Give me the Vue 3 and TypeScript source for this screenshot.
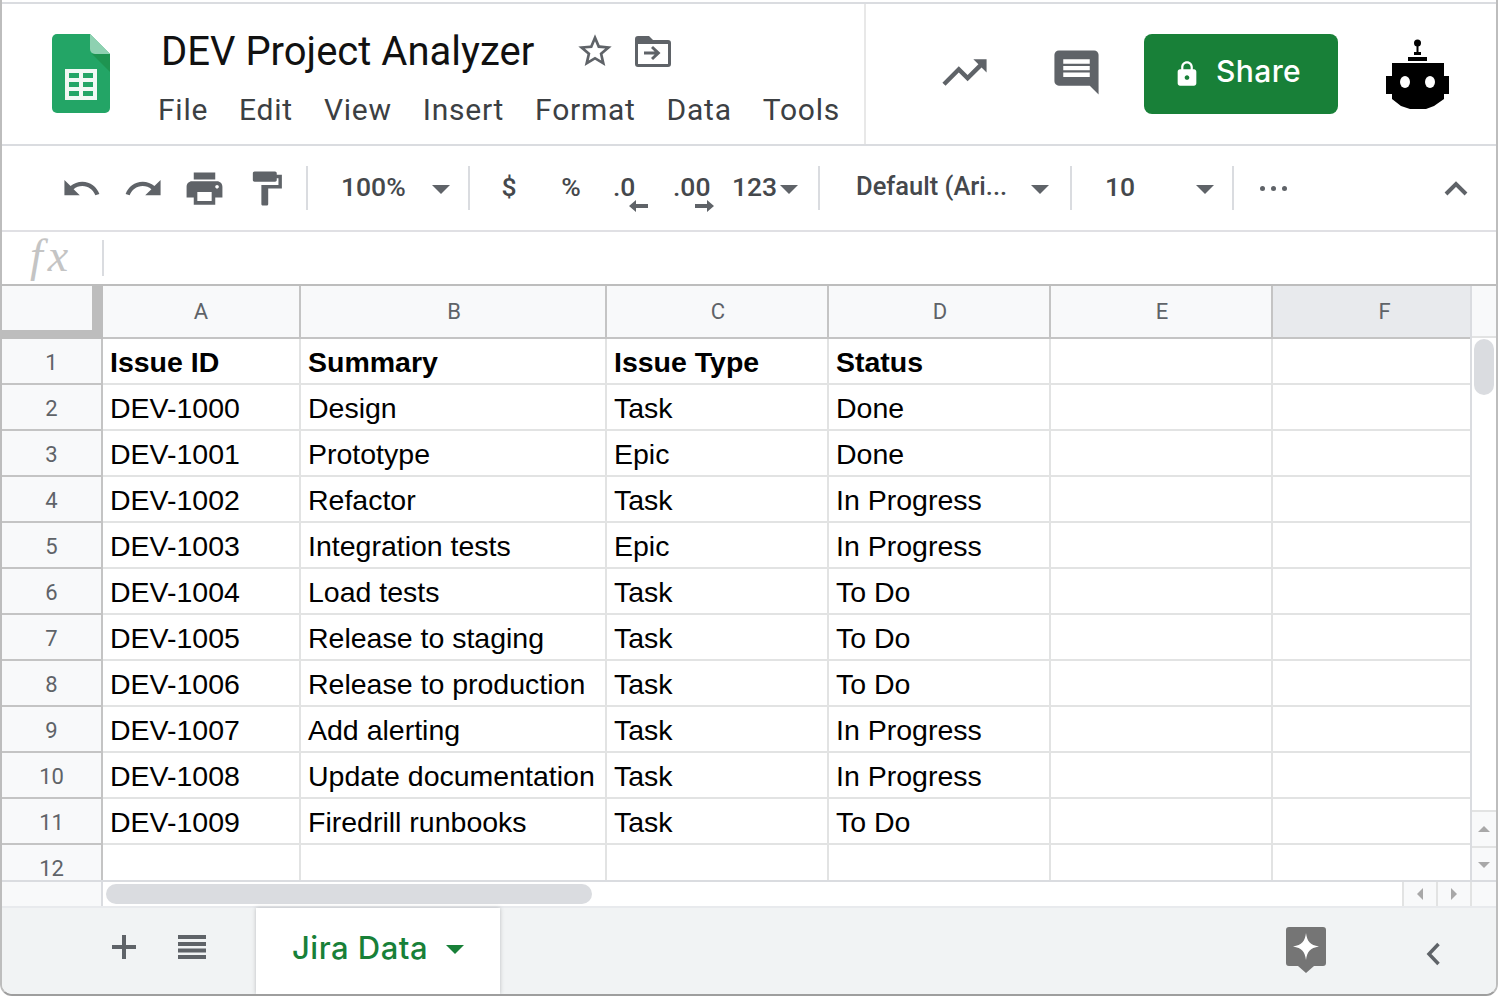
<script setup lang="ts">
const menus = ["File", "Edit", "View", "Insert", "Format", "Data", "Tools"];
const columns = ["A", "B", "C", "D", "E", "F"];

const rows: string[][] = [
  ["Issue ID", "Summary", "Issue Type", "Status"],
  ["DEV-1000", "Design", "Task", "Done"],
  ["DEV-1001", "Prototype", "Epic", "Done"],
  ["DEV-1002", "Refactor", "Task", "In Progress"],
  ["DEV-1003", "Integration tests", "Epic", "In Progress"],
  ["DEV-1004", "Load tests", "Task", "To Do"],
  ["DEV-1005", "Release to staging", "Task", "To Do"],
  ["DEV-1006", "Release to production", "Task", "To Do"],
  ["DEV-1007", "Add alerting", "Task", "In Progress"],
  ["DEV-1008", "Update documentation", "Task", "In Progress"],
  ["DEV-1009", "Firedrill runbooks", "Task", "To Do"],
  ["", "", "", ""],
];
</script>

<template>
  <div class="frame">
    <header class="head">
      <div class="doc">
        <svg class="logo" width="58" height="79" viewBox="0 0 58 79">
          <path d="M5 0h33l20 20v54a5 5 0 0 1-5 5H5a5 5 0 0 1-5-5V5a5 5 0 0 1 5-5z" fill="#23a566" />
          <path d="M38 0l20 20H43a5 5 0 0 1-5-5z" fill="#8ed1b1" />
          <path d="M40 20l18 18V20z" fill="#188038" opacity=".45" />
          <rect x="13" y="35" width="32" height="31" fill="#f1f8f4" />
          <path d="M17 39h10v5H17zM31 39h10v5H31zM17 48h10v5H17zM31 48h10v5H31zM17 57h10v5H17zM31 57h10v5H31z" fill="#23a566" />
        </svg>
        <div class="doc-text">
          <div class="title-row">
            <span class="title">DEV Project Analyzer</span>
            <svg class="star" width="40" height="40" viewBox="0 0 24 24">
              <path fill="#5f6368" d="M22 9.24l-7.19-.62L12 2 9.19 8.63 2 9.24l5.46 4.73L5.82 21 12 17.27 18.18 21l-1.63-7.03L22 9.24zM12 15.4l-3.76 2.27 1-4.28-3.32-2.88 4.38-.38L12 6.1l1.71 4.04 4.38.38-3.32 2.88 1 4.28L12 15.4z" />
            </svg>
            <svg class="move" width="36" height="31" viewBox="0 0 36 31">
              <path fill="#5f6368" fill-rule="evenodd" d="M3 0h11l4 4h15a3 3 0 0 1 3 3v21a3 3 0 0 1-3 3H3a3 3 0 0 1-3-3V3a3 3 0 0 1 3-3zM3 8v20h30V8z" />
              <path fill="#5f6368" d="M18 10l-2 2 3.600 3.500H9v3h10.600L16 22l2 2 7.500-7z" />
            </svg>
          </div>
          <nav class="menu">
            <span v-for="m in menus" :key="m">{{ m }}</span>
          </nav>
        </div>
      </div>
      <div class="actions">
        <svg class="trend" width="53" height="53" viewBox="0 0 24 24">
          <path fill="#5f6368" d="M16 6l2.29 2.29-4.88 4.88-4-4L2 16.59 3.41 18l6-6 4 4 6.3-6.29L22 12V6z" />
        </svg>
        <svg class="comment" width="53" height="53" viewBox="0 0 24 24">
          <path fill="#5f6368" d="M21.99 4c0-1.1-.89-2-1.99-2H4c-1.1 0-2 .9-2 2v12c0 1.1.9 2 2 2h14l4 4-.01-18zM18 14H6v-2h12v2zm0-3H6V9h12v2zm0-3H6V6h12v2z" />
        </svg>
        <button class="share">
          <svg width="28" height="28" viewBox="0 0 24 24">
            <path fill="#fff" d="M18 8h-1V6c0-2.76-2.24-5-5-5S7 3.24 7 6v2H6c-1.1 0-2 .9-2 2v10c0 1.1.9 2 2 2h12c1.1 0 2-.9 2-2V10c0-1.1-.9-2-2-2zm-6 9c-1.1 0-2-.9-2-2s.9-2 2-2 2 .9 2 2-.9 2-2 2zm3.100-9H8.900V6c0-1.71 1.39-3.1 3.100-3.100 1.71 0 3.100 1.39 3.100 3.100v2z" />
          </svg>
          <span>Share</span>
        </button>
        <svg class="robot" width="63" height="70" viewBox="0 0 63 70">
          <circle cx="31.5" cy="4" r="3.5" />
          <path d="M30.500 6h2v8h-2zM28 13h7v3h-7zM22 18h19v4H22z" />
          <path d="M6 24h52v13h5v18h-5v5l-10 7-8 3H24l-9-3-9-7v-5H0V37h6z" />
          <ellipse cx="19" cy="43" rx="5" ry="6" fill="#fff" />
          <ellipse cx="44" cy="43" rx="5" ry="6" fill="#fff" />
        </svg>
      </div>
    </header>

    <div class="toolbar">
      <span class="tool">
        <svg width="41" height="41" viewBox="0 0 24 24"><path d="M12.500 8c-2.650 0-5.050.99-6.900 2.600L2 7v9h9l-3.620-3.620c1.390-1.160 3.160-1.880 5.120-1.880 3.540 0 6.550 2.310 7.600 5.500l2.370-.78C21.080 11.030 17.150 8 12.500 8z" /></svg>
      </span>
      <span class="tool">
        <svg width="41" height="41" viewBox="0 0 24 24"><path d="M18.400 10.600C16.550 8.990 14.150 8 11.500 8c-4.650 0-8.580 3.030-9.960 7.220L3.900 16c1.050-3.190 4.050-5.500 7.600-5.500 1.950 0 3.730.72 5.120 1.880L13 16h9V7l-3.600 3.600z" /></svg>
      </span>
      <span class="tool nudge">
        <svg width="43" height="43" viewBox="0 0 24 24"><path d="M19 8H5c-1.660 0-3 1.340-3 3v6h4v4h12v-4h4v-6c0-1.660-1.340-3-3-3zm-3 11H8v-5h8v5zm3-7c-.55 0-1-.45-1-1s.45-1 1-1 1 .45 1 1-.45 1-1 1zm-1-9H6v4h12V3z" /></svg>
      </span>
      <span class="tool nudge">
        <svg width="41" height="41" viewBox="0 0 24 24"><path d="M18 4V3c0-.55-.45-1-1-1H5c-.55 0-1 .45-1 1v4c0 .55.45 1 1 1h12c.55 0 1-.45 1-1V6h1v4H9v11c0 .55.45 1 1 1h2c.55 0 1-.45 1-1v-9h8V4h-3z" /></svg>
      </span>
      <i class="sep first" />
      <span class="drop zoom"><span>100%</span><i class="caret" /></span>
      <i class="sep" />
      <span class="tool label money">$</span>
      <span class="tool label pct">%</span>
      <span class="tool label dec">.0
        <svg class="dec-arrow" width="19" height="14" viewBox="0 0 19 14"><path d="M7 1v4h12v4H7v4L0 7z" /></svg>
      </span>
      <span class="tool label dec more">.00
        <svg class="dec-arrow" width="19" height="14" viewBox="0 0 19 14"><path d="M12 1v4H0v4h12v4l7-6z" /></svg>
      </span>
      <span class="drop num"><span>123</span><i class="caret" /></span>
      <i class="sep" />
      <span class="drop font"><span>Default (Ari...</span><i class="caret" /></span>
      <i class="sep" />
      <span class="drop size"><span>10</span><i class="caret" /></span>
      <i class="sep" />
      <span class="dots"><i /><i /><i /></span>
      <svg class="collapse" width="26" height="16" viewBox="0 0 26 16">
        <path d="M3 14L13 4l10 10" fill="none" stroke="#5f6368" stroke-width="4" />
      </svg>
    </div>

    <div class="formula">
      <span class="fx">fx</span>
      <i class="fx-sep" />
    </div>

    <div class="sheet">
      <div class="grid">
        <div class="corner" />
        <div v-for="c in columns" :key="c" class="col-head" :class="{ picked: c === 'F' }">{{ c }}</div>
        <template v-for="(row, i) in rows" :key="i">
          <div class="row-head">{{ i + 1 }}</div>
          <div v-for="(text, j) in row" :key="j" class="cell" :class="{ bold: i === 0 }">{{ text }}</div>
          <div class="cell" />
          <div class="cell" />
        </template>
      </div>
      <div class="vbar">
        <div class="vbar-top" />
        <div class="vtrack"><div class="vthumb" /></div>
        <div class="vbtn"><i class="tri up" /></div>
        <div class="vbtn"><i class="tri down" /></div>
      </div>
    </div>

    <div class="hbar">
      <div class="hbar-left" />
      <div class="htrack"><div class="hthumb" /></div>
      <div class="hbtn"><i class="tri left" /></div>
      <div class="hbtn"><i class="tri right" /></div>
      <div class="hbar-end" />
    </div>

    <footer class="tabs">
      <svg class="plus" width="24" height="24" viewBox="0 0 24 24">
        <path fill="#5f6368" d="M10 0h4v10h10v4H14v10h-4V14H0v-4h10z" />
      </svg>
      <svg class="all" width="28" height="24" viewBox="0 0 28 24">
        <path fill="#5f6368" d="M0 0h28v4H0zM0 7h28v4H0zM0 13.500h28v4H0zM0 20h28v4H0z" />
      </svg>
      <div class="tab">
        <span>Jira Data</span>
        <i class="caret green" />
      </div>
      <svg class="explore" width="40" height="46" viewBox="0 0 40 46">
        <path fill="#757575" d="M3 0h34a3 3 0 0 1 3 3v33a3 3 0 0 1-3 3h-9l-8 7-8-7H3a3 3 0 0 1-3-3V3a3 3 0 0 1 3-3z" />
        <path fill="#fff" d="M20 6c1 8 4 12 13 13.500C24 21 21 25 20 33c-1-8-4-12-13-13.500C16 18 19 14 20 6z" />
      </svg>
      <svg class="side" width="14" height="24" viewBox="0 0 14 24">
        <path d="M12.500 2L3 12l9.500 10" fill="none" stroke="#5f6368" stroke-width="3.500" />
      </svg>
    </footer>
  </div>
</template>

<style scoped>
.frame {
  width: 1498px;
  height: 996px;
  box-sizing: border-box;
  display: flex;
  flex-direction: column;
  padding-top: 2px;
  border-left: 2px solid #bdbdbd;
  border-right: 2px solid #bdbdbd;
  border-bottom: 2px solid #9e9e9e;
  border-radius: 0 0 12px 12px;
  overflow: hidden;
  background: #fff;
  font-family: Roboto, "Liberation Sans", sans-serif;
}

i {
  display: block;
}

.head {
  height: 144px;
  flex: none;
  display: flex;
  box-sizing: border-box;
  border-top: 2px solid #dadce0;
  border-bottom: 2px solid #dadce0;
}

.doc {
  width: 864px;
  display: flex;
  box-sizing: border-box;
  padding: 30px 0 0 50px;
  border-right: 2px solid #e8e8e8;
}

.logo {
  flex: none;
}

.doc-text {
  margin-left: 48px;
  margin-top: -9px;
}

.title-row {
  display: flex;
  align-items: center;
  height: 52px;
  margin-left: 3px;
}

.title {
  font-size: 40px;
  color: #111;
  white-space: nowrap;
}

.star {
  margin-left: 41px;
}

.move {
  margin-left: 20px;
}

.menu {
  display: flex;
  gap: 31px;
  margin-top: 15px;
  font-size: 30px;
  line-height: 36px;
  letter-spacing: 0.75px;
  color: #3c4043;
}

.actions {
  flex: 1;
  display: flex;
  align-items: center;
  padding-left: 72px;
}

.trend {
  margin-top: -4px;
}

.comment {
  margin-left: 59px;
  margin-top: -4px;
}

.share {
  width: 194px;
  height: 80px;
  margin-left: 41px;
  border: 0;
  border-radius: 8px;
  background: #188038;
  color: #fff;
  display: flex;
  align-items: center;
  padding: 0 0 6px 29px;
  font-family: Inter, Roboto, sans-serif;
  font-weight: 500;
  font-size: 30px;
  letter-spacing: 0.4px;
}

.share svg {
  margin-top: 6px;
}

.share span {
  margin-left: 15px;
}

.robot {
  margin-left: 48px;
}

.toolbar {
  height: 86px;
  flex: none;
  display: flex;
  align-items: center;
  box-sizing: border-box;
  padding-left: 48px;
  border-bottom: 2px solid #e0e0e4;
  color: #45484c;
  font-size: 26.5px;
  font-weight: 500;
}

.tool {
  width: 62px;
  height: 44px;
  display: flex;
  align-items: center;
  justify-content: center;
  position: relative;
  flex: none;
}

.label {
  box-sizing: border-box;
  padding-bottom: 4px;
}

.tool svg {
  fill: #5f6368;
}

.nudge svg {
  margin-left: -2px;
}

.sep {
  width: 2px;
  height: 44px;
  background: #dadce0;
  flex: none;
}

.sep.first {
  margin-left: 8px;
}

.drop {
  display: flex;
  align-items: center;
  justify-content: space-between;
  box-sizing: border-box;
  flex: none;
}

.drop span {
  margin-bottom: 4px;
}

.zoom {
  width: 160px;
  padding: 0 18px 0 33px;
}

.num {
  width: 66px;
  margin-left: 4px;
  margin-right: 20px;
}

.font {
  width: 250px;
  padding: 0 21px 0 36px;
  font-size: 25.5px;
}

.size {
  width: 160px;
  padding: 0 18px 0 33px;
}

.caret {
  width: 0;
  height: 0;
  border-left: 9px solid transparent;
  border-right: 9px solid transparent;
  border-top: 9px solid #5f6368;
  margin-top: 3px;
}

.money {
  margin-left: 8px;
}

.dec {
  justify-content: flex-start;
  padding-left: 11px;
}

.more {
  width: 64px;
  padding-left: 9px;
}

.dec-arrow {
  position: absolute;
  left: 27px;
  top: 33px;
}

.more .dec-arrow {
  left: 31px;
}

.dots {
  display: flex;
  gap: 6px;
  margin-left: 26px;
}

.dots i {
  width: 5px;
  height: 5px;
  border-radius: 50%;
  background: #5f6368;
}

.collapse {
  margin-left: auto;
  margin-right: 27px;
}

.formula {
  height: 54px;
  flex: none;
  display: flex;
  align-items: center;
  box-sizing: border-box;
  border-bottom: 2px solid #bdbdbd;
  padding-left: 28px;
}

.fx {
  width: 72px;
  font-family: "Liberation Serif", serif;
  font-style: italic;
  font-size: 46px;
  letter-spacing: 5px;
  color: #c4c4c4;
  margin-bottom: 6px;
}

.fx-sep {
  width: 2px;
  height: 36px;
  background: #dadce0;
}

.sheet {
  height: 596px;
  flex: none;
  display: flex;
}

.grid {
  width: 1470px;
  display: grid;
  grid-template-columns: 101px 198px 306px 222px 222px 222px 199px;
  grid-template-rows: 53px repeat(11, 46px) 37px;
}

.corner {
  box-sizing: border-box;
  background: #f8f9fa;
  border-right: 2px solid #bdbdbd;
  box-shadow: inset -9px -8px 0 #bdbdbd;
  border-bottom: 1px solid #bdbdbd;
}

.col-head {
  box-sizing: border-box;
  display: flex;
  align-items: center;
  justify-content: center;
  background: #f8f9fa;
  border-right: 2px solid #c4c4c4;
  border-bottom: 2px solid #c4c4c4;
  color: #5f6368;
  font-size: 22px;
}

.col-head + .col-head {
  padding-left: 2px;
}

.col-head.picked {
  background: #e8eaed;
  padding-left: 26px;
}

.row-head {
  box-sizing: border-box;
  display: flex;
  justify-content: center;
  background: #f8f9fa;
  border-right: 2px solid #c4c4c4;
  border-bottom: 2px solid #c4c4c4;
  color: #5f6368;
  font-size: 22px;
  line-height: 26px;
  padding-top: 11px;
}

.cell {
  box-sizing: border-box;
  display: flex;
  align-items: center;
  padding: 3px 0 0 7px;
  border-right: 2px solid #e2e3e3;
  border-bottom: 2px solid #e2e3e3;
  font-family: "Liberation Sans", Arial, sans-serif;
  font-size: 28.5px;
  color: #000;
  white-space: nowrap;
}

.cell.bold {
  font-weight: 700;
}

.vbar {
  flex: 1;
  display: flex;
  flex-direction: column;
  border-left: 2px solid #dadce0;
  margin-left: -2px;
}

.vbar-top {
  height: 52px;
  flex: none;
  background: #f8f9fa;
  border-bottom: 2px solid #e2e3e3;
  box-sizing: border-box;
}

.vtrack {
  flex: 1;
  padding: 1px 2px 0;
}

.vthumb {
  height: 56px;
  width: 20px;
  border-radius: 10px;
  background: #dadce0;
}

.vbtn {
  height: 36px;
  flex: none;
  box-sizing: border-box;
  display: flex;
  align-items: center;
  justify-content: center;
  background: #f8f9fa;
  border-top: 2px solid #e2e3e3;
}

.tri {
  width: 0;
  height: 0;
  border: 6px solid transparent;
}

.tri.up {
  border-top: 0;
  border-bottom-color: #a8a8a8;
}

.tri.down {
  border-bottom: 0;
  border-top-color: #a8a8a8;
}

.tri.left {
  border-left: 0;
  border-right-color: #a8a8a8;
}

.tri.right {
  border-right: 0;
  border-left-color: #a8a8a8;
}

.hbar {
  height: 26px;
  flex: none;
  display: flex;
  box-sizing: border-box;
  margin-top: -2px;
  border-top: 2px solid #dadce0;
}

.hbar-left {
  width: 99px;
  flex: none;
  background: #f8f9fa;
  border-right: 2px solid #dadce0;
}

.htrack {
  flex: 1;
  padding: 2px 3px;
}

.hthumb {
  width: 486px;
  height: 20px;
  border-radius: 10px;
  background: #dadce0;
}

.hbtn {
  width: 34px;
  flex: none;
  box-sizing: border-box;
  display: flex;
  align-items: center;
  justify-content: center;
  background: #f8f9fa;
  border-left: 2px solid #e2e3e3;
}

.hbar-end {
  width: 26px;
  flex: none;
  box-sizing: border-box;
  background: #f8f9fa;
  border-left: 2px solid #e2e3e3;
}

.tabs {
  flex: 1;
  min-height: 0;
  display: flex;
  align-items: flex-start;
  background: #f1f3f4;
  border-top: 2px solid #e8eaed;
  box-sizing: border-box;
}

.plus {
  margin: 27px 0 0 110px;
  flex: none;
}

.all {
  margin: 27px 0 0 42px;
  flex: none;
}

.tab {
  width: 244px;
  height: 100%;
  flex: none;
  margin-left: 50px;
  box-sizing: border-box;
  display: flex;
  align-items: center;
  padding: 0 0 7px 36px;
  background: #fff;
  box-shadow: 0 0 4px rgba(60, 64, 67, 0.3);
  color: #188038;
  font-family: Inter, Roboto, sans-serif;
  font-size: 31px;
  font-weight: 500;
  letter-spacing: 0.5px;
}

.caret.green {
  margin-left: 18px;
  border-top-color: #188038;
}

.explore {
  margin: 19px 0 0 786px;
  flex: none;
}

.side {
  margin: 34px 0 0 100px;
  flex: none;
}
</style>

<style>
html,
body {
  margin: 0;
  background: #fff;
}
</style>
